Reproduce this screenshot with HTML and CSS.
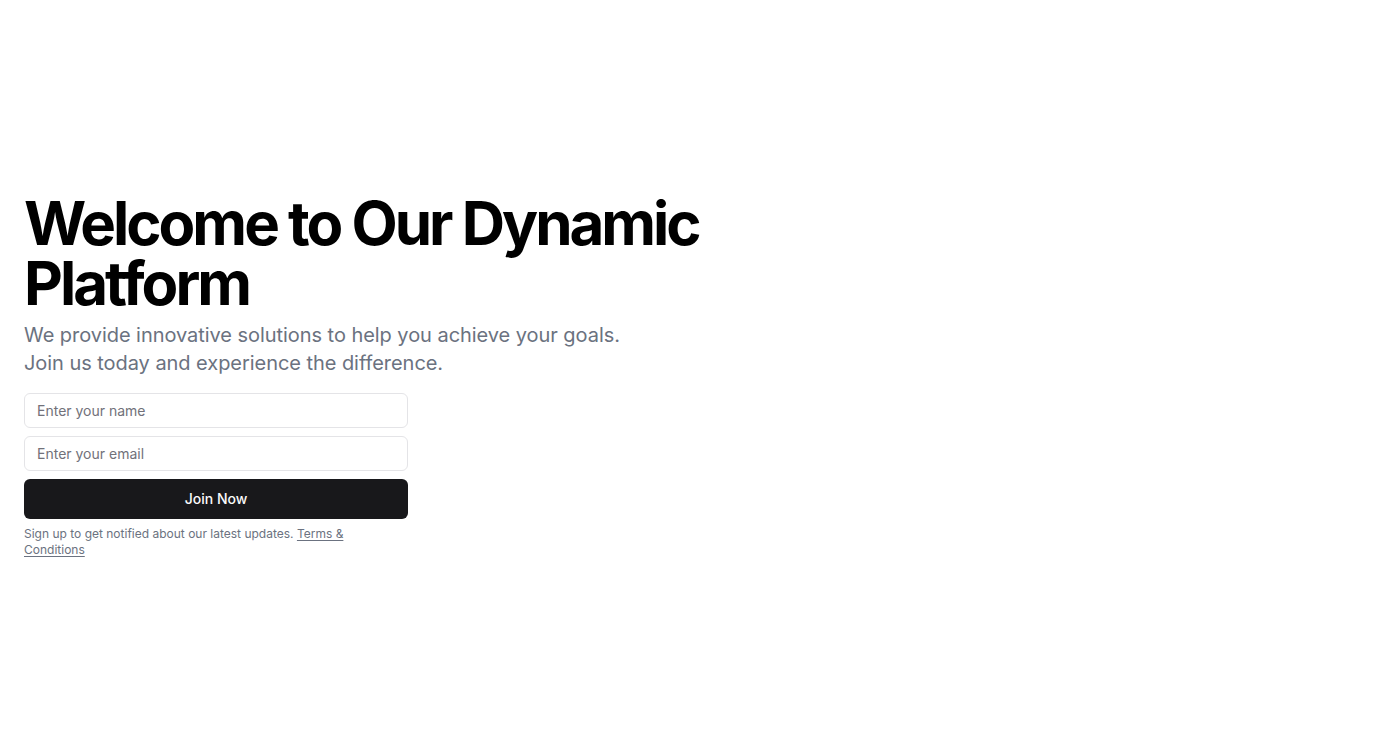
FILE: index.html
```html
<!DOCTYPE html>
<html lang="en">
<head>
<meta charset="utf-8">
<title>Welcome</title>
<link rel="stylesheet" href="styles.css">
</head>
<body>
<main class="hero">
  <div class="container">
    <div class="intro">
      <h1 class="title">Welcome to Our Dynamic Platform</h1>
      <p class="lead">We provide innovative solutions to help you achieve your goals. Join us today and experience the difference.</p>
    </div>
    <div class="signup">
      <form class="form">
        <input class="input" type="text" placeholder="Enter your name">
        <input class="input" type="email" placeholder="Enter your email">
        <button class="button" type="button">Join Now</button>
      </form>
      <p class="note">Sign up to get notified about our latest updates. <a class="link" href="#">Terms &amp; Conditions</a></p>
    </div>
  </div>
</main>
</body>
</html>
```

FILE: styles.css
```css
* { box-sizing: border-box; }
html, body { margin: 0; padding: 0; }
body {
  font-family: Inter, "Noto Sans", sans-serif;
  background: #ffffff;
  color: #09090b;
}
.hero {
  min-height: 100vh;
  display: flex;
  align-items: center;
}
.container {
  width: 100%;
  padding: 0 24px;
  display: flex;
  flex-direction: column;
  gap: 16px;
}
.intro {
  display: flex;
  flex-direction: column;
  gap: 8px;
}
.title {
  margin: 0;
  font-size: 60px;
  line-height: 60px;
  font-weight: 700;
  letter-spacing: -0.05em;
  color: #000;
  max-width: 720px;
}
.lead {
  margin: 0;
  max-width: 600px;
  font-size: 20px;
  line-height: 28px;
  letter-spacing: -0.05px;
  color: #6b7280;
}
.signup {
  width: 100%;
  max-width: 384px;
  display: flex;
  flex-direction: column;
  gap: 7px;
}
.form {
  display: flex;
  flex-direction: column;
  gap: 8px;
}
.input {
  height: 35px;
  width: 100%;
  border: 1px solid #e4e4e7;
  border-radius: 6px;
  padding: 4px 12px;
  font-family: inherit;
  font-size: 14px;
  color: #09090b;
  background: #fff;
  outline: none;
}
.input::placeholder { color: #71717a; }
.button {
  height: 40px;
  width: 100%;
  border: none;
  border-radius: 6px;
  background: #18181b;
  color: #fafafa;
  font-family: inherit;
  font-size: 14px;
  font-weight: 500;
  cursor: pointer;
}
.note {
  margin: 0;
  max-width: 370px;
  font-size: 12px;
  line-height: 16px;
  color: #6b7280;
}
.link {
  color: inherit;
  text-decoration: underline;
  text-underline-offset: 2px;
}
```
